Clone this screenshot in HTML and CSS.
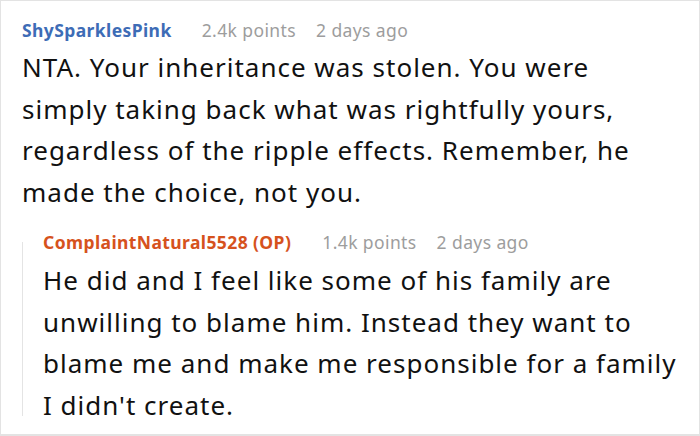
FILE: index.html
```html
<!DOCTYPE html>
<html>
<head>
<meta charset="utf-8">
<link rel="stylesheet" href="styles.css">
</head>
<body>
<div class="frame">
  <div class="comment">
    <div class="meta">
      <span class="user user-blue">ShySparklesPink</span>
      <span class="points">2.4k points</span>
      <span class="time">2 days ago</span>
    </div>
    <p class="text">NTA. Your inheritance was stolen. You were simply taking back what was rightfully yours, regardless of the ripple effects. Remember, he made the choice, not you.</p>
  </div>
  <div class="reply">
    <div class="meta meta-reply">
      <span class="user user-orange">ComplaintNatural5528 (OP)</span>
      <span class="points">1.4k points</span>
      <span class="time">2 days ago</span>
    </div>
    <div class="reply-body">
      <div class="thread"></div>
      <p class="text text-reply">He did and I feel like some of his family are unwilling to blame him. Instead they want to blame me and make me responsible for a family I didn't create.</p>
    </div>
  </div>
</div>
</body>
</html>
```

FILE: styles.css
```css
html, body {
  margin: 0;
  padding: 0;
  background: #fff;
}
.frame {
  width: 700px;
  height: 436px;
  box-sizing: border-box;
  border: 1px solid #e3e3e3;
  border-bottom-width: 2px;
  padding: 17px 22px 0 21px;
  font-family: "Noto Sans", "Open Sans", sans-serif;
  color: #111;
  overflow: hidden;
}
.meta {
  display: flex;
  align-items: baseline;
  font-size: 17.5px;
  letter-spacing: 0.4px;
  line-height: 24px;
  height: 24px;
}
.user {
  font-weight: 700;
  margin-right: 30px;
}
.user-blue { color: #3d6cb6; }
.user-orange { color: #d6521d; margin-right: 31px; }
.points, .time { color: #9d9d9d; }
.points { margin-right: 20px; }
.text {
  margin: 5px 0 0 0;
  font-size: 26px;
  letter-spacing: 1px;
  line-height: 41.5px;
}
.reply {
  margin-top: 17px;
}
.meta-reply {
  padding-left: 21px;
}
.reply-body {
  display: flex;
  align-items: stretch;
}
.thread {
  width: 1px;
  flex: none;
  background: #e4e4e4;
  margin-top: -12px;
  margin-bottom: 10px;
}
.text-reply {
  margin-top: 6px;
  padding-left: 20px;
}
```
